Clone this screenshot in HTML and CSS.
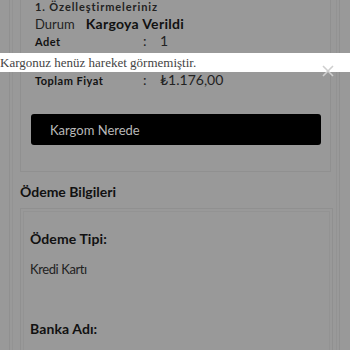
FILE: index.html
```html
<!DOCTYPE html>
<html lang="tr">
<head>
<meta charset="utf-8">
<title>Sipariş Detayı</title>
<link rel="stylesheet" href="styles.css">
</head>
<body>
<div class="shell">
  <div class="shell-inner">
    <section class="card order">
      <div class="item-title">1. Özelleştirmeleriniz</div>
      <div class="status"><span class="status-label">Durum</span><span class="status-value">Kargoya Verildi</span></div>
      <div class="row"><span class="row-label">Adet</span><span class="row-colon">:</span><span class="row-value">1</span></div>
      <div class="row row-total"><span class="row-label">Toplam Fiyat</span><span class="row-colon">:</span><span class="row-value">₺1.176,00</span></div>
      <button class="track-btn" type="button">Kargom Nerede</button>
    </section>
    <h2 class="section-title">Ödeme Bilgileri</h2>
    <section class="card payment">
      <div class="payment-inner">
        <div class="field-label">Ödeme Tipi:</div>
        <div class="field-value">Kredi Kartı</div>
        <div class="field-label bank">Banka Adı:</div>
      </div>
    </section>
  </div>
</div>
<div class="toast">Kargonuz henüz hareket görmemiştir.</div>
<button class="toast-close" type="button" aria-label="Kapat">
  <svg width="12" height="12" viewBox="0 0 12 12"><path d="M1 1L11 11M11 1L1 11" stroke="#cfcfcf" stroke-width="1.6" fill="none"/></svg>
</button>
</body>
</html>
```
FILE: styles.css
```css
html, body {
  margin: 0;
  padding: 0;
  background: #999999;
  height: 100%;
  overflow: hidden;
}
body {
  font-family: Lato, "Open Sans", sans-serif;
  color: #111111;
}
.shell {
  margin-left: 9px;
  width: 329px;
  min-height: 400px;
  border-left: 1px solid #909090;
  border-right: 1px solid #909090;
}
.shell-inner {
  margin: 0 2px;
  min-height: 400px;
  border-left: 1px solid #939393;
  border-right: 1px solid #939393;
  padding: 0 5px 0 7px;
}
.card {
  width: 309px;
  border: 1px solid #909090;
}
.order {
  border-top: none;
  padding: 0 10px 26px 10px;
  box-sizing: border-box;
  width: 311px;
}
.item-title {
  font-size: 11px;
  font-weight: 700;
  line-height: 14px;
  letter-spacing: 0.9px;
  padding-left: 4px;
  color: #222222;
}
.status {
  font-size: 13px;
  line-height: 19px;
  padding-left: 4px;
  display: flex;
  align-items: baseline;
  gap: 11px;
}
.status-label {
  color: #222222;
}
.status-value {
  font-size: 14px;
  font-weight: 700;
  letter-spacing: 0.3px;
}
.row {
  display: grid;
  grid-template-columns: 108px 17px 1fr;
  padding-left: 4px;
  line-height: 14px;
  align-items: baseline;
}
.row-label {
  font-size: 11px;
  font-weight: 700;
  letter-spacing: 0.5px;
}
.row-colon, .row-value {
  font-size: 14px;
  color: #222222;
}
.row-total {
  margin-top: 22px;
  line-height: 18px;
}
.track-btn {
  display: block;
  width: 290px;
  height: 31px;
  margin-top: 24px;
  background: #000000;
  color: #b8b8b8;
  border: none;
  border-radius: 3px;
  text-align: left;
  padding: 0 0 0 19px;
  font-family: Lato, sans-serif;
  font-size: 13px;
}
.section-title {
  margin: 10px 0 6px 0;
  font-size: 14px;
  line-height: 20px;
  font-weight: 700;
  letter-spacing: 0;
}
.payment {
  padding: 2px;
  width: 307px;
}
.payment-inner {
  border: 1px solid #939393;
  padding: 17px 6px 40px 6px;
  min-height: 200px;
}
.field-label {
  font-size: 14px;
  font-weight: 700;
  line-height: 20px;
  letter-spacing: 0.1px;
}
.field-value {
  font-size: 13px;
  line-height: 18px;
  margin-top: 11px;
  letter-spacing: -0.4px;
  color: #222222;
}
.field-label.bank {
  margin-top: 41px;
}
.toast {
  position: absolute;
  top: 53px;
  left: 0;
  right: 0;
  height: 19px;
  background: #ffffff;
  font-family: "Liberation Serif", serif;
  font-size: 13px;
  line-height: 19px;
  color: #444444;
}
.toast-close {
  position: absolute;
  left: 322px;
  top: 65px;
  width: 12px;
  height: 12px;
  padding: 0;
  border: none;
  background: transparent;
  display: block;
}
.toast-close svg {
  display: block;
}
```
